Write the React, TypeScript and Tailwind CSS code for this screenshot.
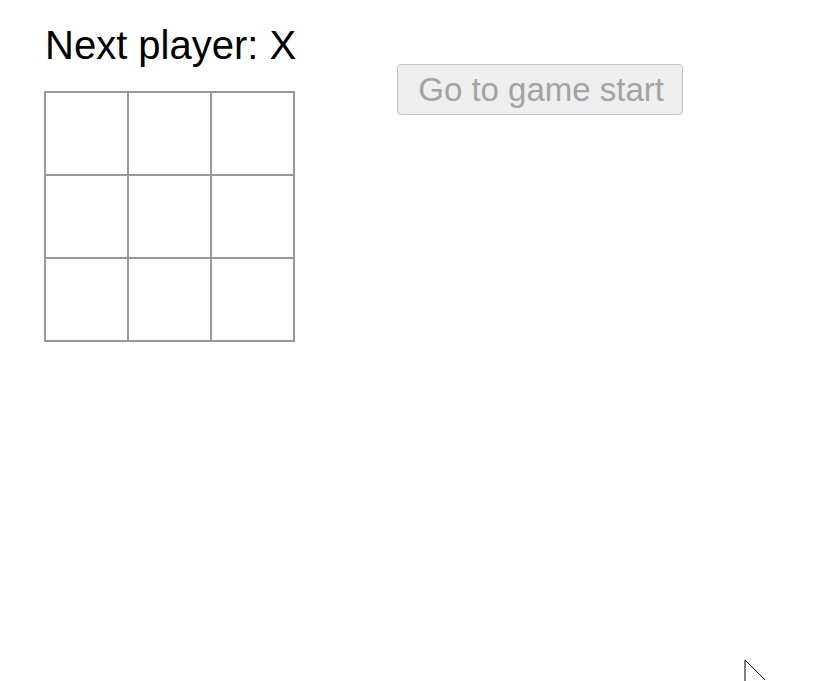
import React from "react";

export default function App() {
  const cells = Array.from({ length: 9 });
  return (
    <div
      className="relative w-[832px] h-[681px] bg-white overflow-hidden"
      style={{ fontFamily: '"Liberation Sans", Arial, sans-serif' }}
    >
      <div className="flex flex-row pl-[44px] pt-[22px]">
        <div className="flex flex-col">
          <div className="text-[40px] leading-[46px] text-black pl-[1px]">Next player: X</div>
          <div className="mt-[23px] grid grid-cols-[repeat(3,83px)] border-l-2 border-t-2 border-[#999999] w-max">
            {cells.map((_, i) => (
              <div key={i} className="w-[83px] h-[83px] border-r-2 border-b-2 border-[#999999]" />
            ))}
          </div>
        </div>
        <div className="ml-[101px] mt-[42px]">
          <button
            disabled
            className="h-[51px] w-[286px] rounded-[4px] border border-[#c4c4c4] bg-[#efefef] text-[#a3a3a3] text-[33px] leading-none pl-[20px] pr-[18px] flex items-center whitespace-nowrap"
            style={{ fontFamily: '"Liberation Sans", Arial, sans-serif' }}
          >
            Go to game start
          </button>
        </div>
      </div>
      <svg
        className="absolute left-[744px] top-[659px]"
        width="24"
        height="24"
        viewBox="0 0 24 24"
      >
        <polyline points="1,24 1,1 21,21" fill="none" stroke="#000" strokeWidth="1" />
      </svg>
    </div>
  );
}
